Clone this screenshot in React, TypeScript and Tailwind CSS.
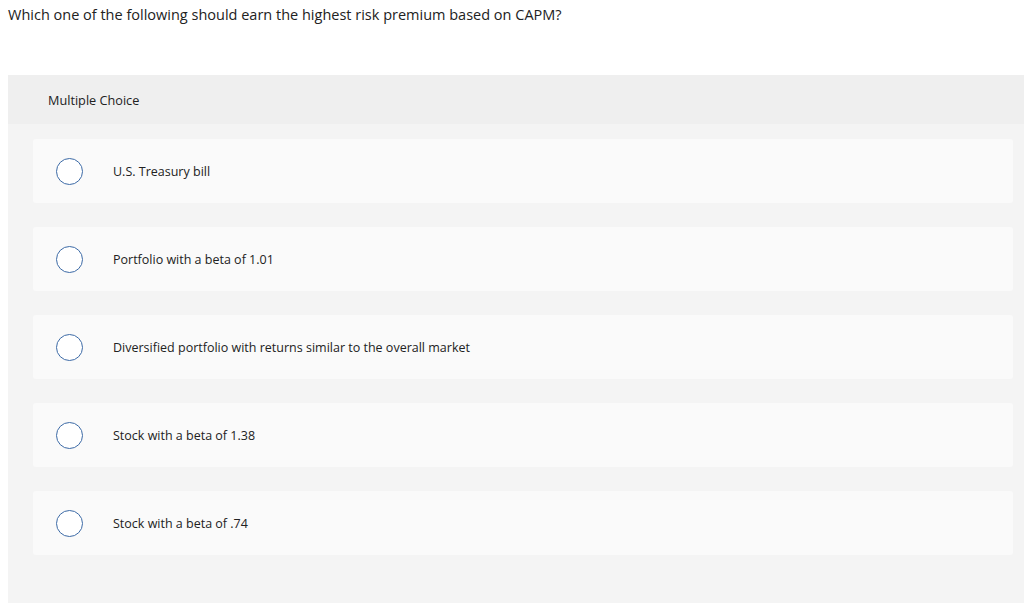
import React from 'react'

const choices = [
	'U.S. Treasury bill',
	'Portfolio with a beta of 1.01',
	'Diversified portfolio with returns similar to the overall market',
	'Stock with a beta of 1.38',
	'Stock with a beta of .74',
]

export default function App() {
	const [selected, setSelected] = React.useState<number | null>(null)

	return (
		<div
			className="min-h-screen bg-white text-[#222]"
			style={{ fontFamily: '"Open Sans", Arial, sans-serif' }}
		>
			<p className="pl-2 pt-[5px] text-[14.5px] leading-[20px]">
				Which one of the following should earn the highest risk premium based
				on CAPM?
			</p>

			<div className="ml-2 mt-[50px] bg-[#f4f4f4] pb-[60px]">
				<div className="flex h-[49px] items-center bg-[#efefef] pl-10 pt-[2px] text-[12.7px]">
					Multiple Choice
				</div>

				<div className="flex flex-col gap-6 pl-[25px] pr-[11px] pt-[15px]">
					{choices.map((choice, i) => (
						<button
							key={choice}
							type="button"
							onClick={() => setSelected(i)}
							className="flex h-16 items-center rounded-[3px] bg-[#fafafa] pl-[23px] text-left text-[12.5px]"
						>
							<span className="flex h-[27px] w-[27px] shrink-0 items-center justify-center rounded-full border border-[#3c6aa6] bg-white">
								{selected === i && (
									<span className="h-[15px] w-[15px] rounded-full bg-[#3c6aa6]" />
								)}
							</span>
							<span className="ml-[30px] pt-[3px]">{choice}</span>
						</button>
					))}
				</div>
			</div>
		</div>
	)
}
